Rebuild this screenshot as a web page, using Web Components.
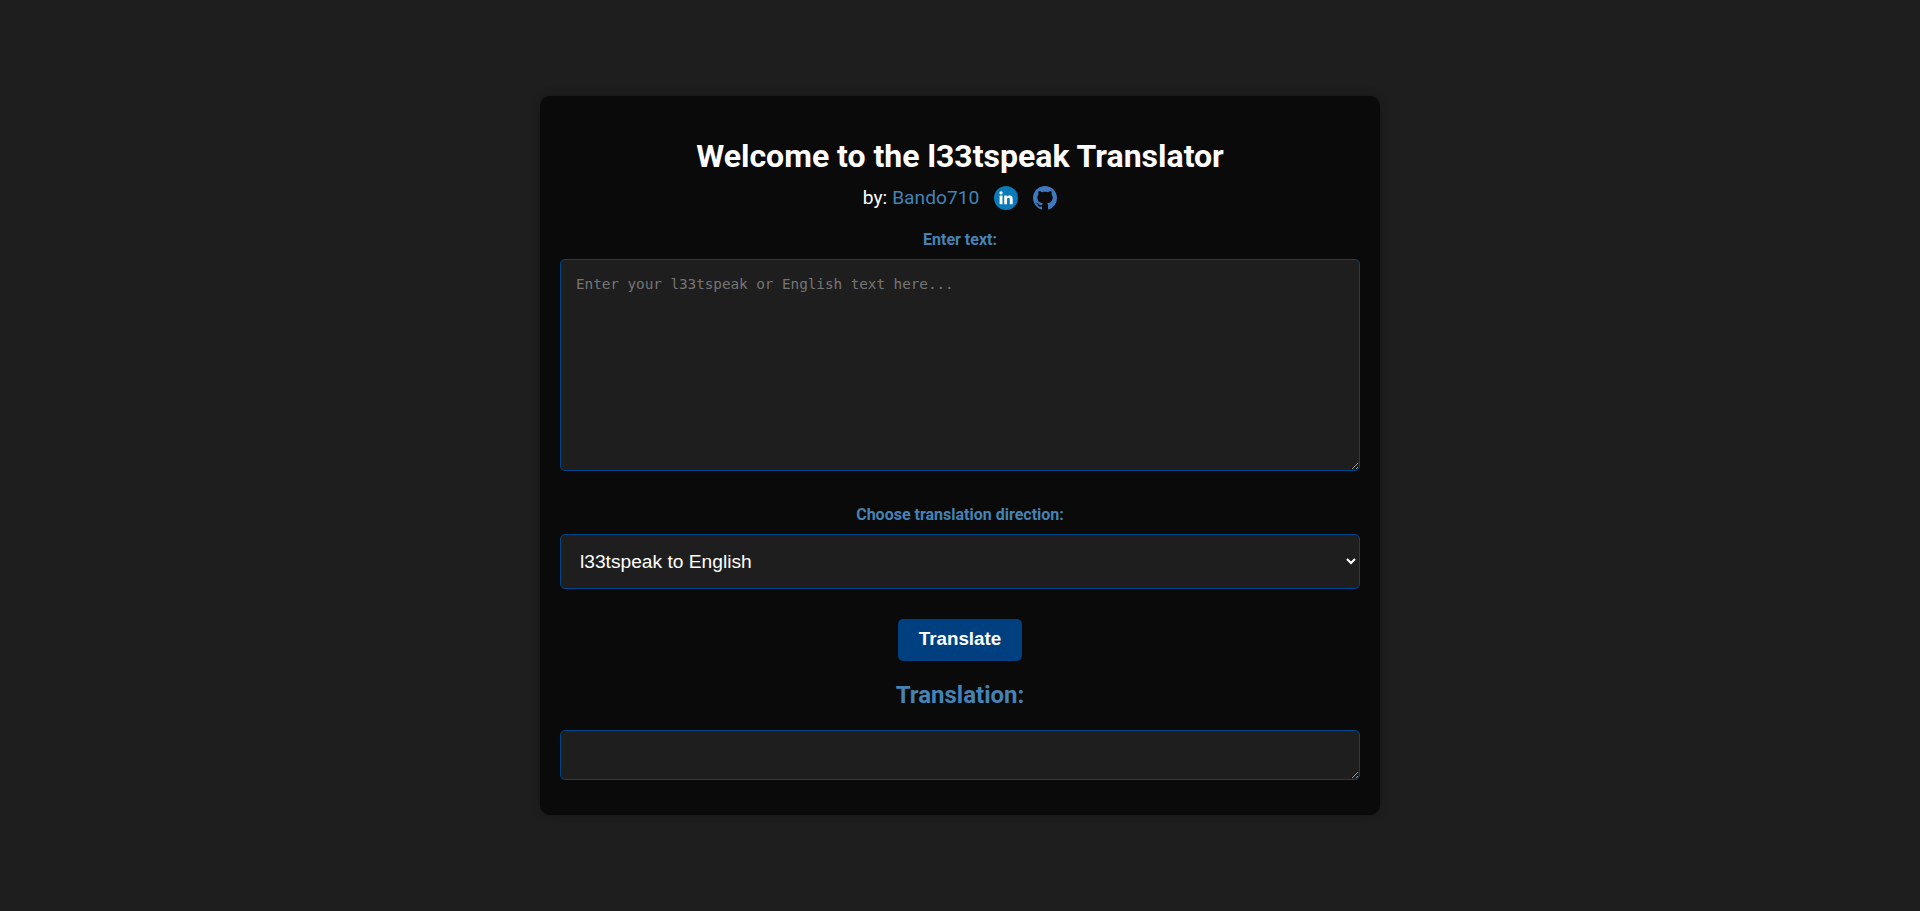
<!DOCTYPE html>
<html lang="en">
<head>
<meta charset="utf-8">
<title>l33tspeak Translator</title>
<style>
  html, body { margin: 0; height: 100%; }
  body {
    background: #1e1e1e;
    color: #fff;
    font-family: Roboto, sans-serif;
  }
</style>
</head>
<body>
<translator-page>
  <translator-card>
    <card-header slot="header" name="Bando710"></card-header>
    <text-field label="Enter text:" placeholder="Enter your l33tspeak or English text here..."></text-field>
    <direction-field label="Choose translation direction:"></direction-field>
    <translate-button>Translate</translate-button>
    <translation-output></translation-output>
  </translator-card>
</translator-page>

<script>
class TranslatorPage extends HTMLElement {
  constructor() {
    super();
    this.attachShadow({ mode: "open" });
    this.shadowRoot.innerHTML = `
<style>
  :host { display: flex; justify-content: center; align-items: center; height: 911px; }
</style>
<slot></slot>`;
  }
}

class TranslatorCard extends HTMLElement {
  constructor() {
    super();
    this.attachShadow({ mode: "open" });
    this.shadowRoot.innerHTML = `
<style>
  :host {
    display: flex;
    flex-direction: column;
    box-sizing: border-box;
    width: 840px;
    height: 719px;
    padding: 42px 20px 0;
    background: #0a0a0a;
    border-radius: 10px;
    box-shadow: 0 0 10px rgba(0,0,0,0.3);
  }
</style>
<slot name="header"></slot>
<slot></slot>`;
  }
}

class CardHeader extends HTMLElement {
  connectedCallback() {
    this.attachShadow({ mode: "open" });
    this.shadowRoot.innerHTML = `
<style>
  :host { display: block; text-align: center; }
  h1 { margin: 0; font-size: 32px; line-height: 37px; font-weight: 700; color: #fff; }
  .by {
    display: flex; justify-content: center; align-items: center;
    height: 24px; margin-top: 11px;
    font-size: 19.2px; line-height: 24px; color: #fff;
  }
  a { color: #4682b4; text-decoration: none; margin-left: 5px; }
  svg { display: block; width: 24px; height: 24px; }
  .li { margin-left: 15px; }
  .gh { margin-left: 15px; }
</style>
<h1>Welcome to the l33tspeak Translator</h1>
<div class="by">by:<a href="#">${this.getAttribute("name")}</a>
  <svg class="li" viewBox="0 0 24 24">
    <circle cx="12" cy="12" r="12" fill="#0a7ab8"/>
    <rect x="5.6" y="9.6" width="2.9" height="8.6" fill="#fff"/>
    <circle cx="7.05" cy="6.9" r="1.65" fill="#fff"/>
    <path fill="#fff" d="M10.2 9.6h2.75v1.2c.45-.8 1.4-1.4 2.65-1.4 2.4 0 3.1 1.55 3.1 3.9v4.9h-2.9v-4.35c0-1.15-.25-2.05-1.35-2.05-1.2 0-1.4.95-1.4 2.05v4.35h-2.85z"/>
  </svg>
  <svg class="gh" viewBox="0 0 16 16">
    <path fill="#4078c0" d="M8 0C3.58 0 0 3.58 0 8c0 3.54 2.29 6.53 5.47 7.59.4.07.55-.17.55-.38 0-.19-.01-.82-.01-1.49-2.01.37-2.53-.49-2.69-.94-.09-.23-.48-.94-.82-1.13-.28-.15-.68-.52-.01-.53.63-.01 1.08.58 1.23.82.72 1.21 1.87.87 2.33.66.07-.52.28-.87.51-1.07-1.78-.2-3.64-.89-3.64-3.95 0-.87.31-1.59.82-2.15-.08-.2-.36-1.02.08-2.12 0 0 .67-.21 2.2.82.64-.18 1.32-.27 2-.27s1.36.09 2 .27c1.53-1.04 2.2-.82 2.2-.82.44 1.1.16 1.92.08 2.12.51.56.82 1.27.82 2.15 0 3.07-1.87 3.75-3.65 3.95.29.25.54.73.54 1.48 0 1.07-.01 1.93-.01 2.2 0 .21.15.46.55.38A8.01 8.01 0 0 0 16 8c0-4.42-3.58-8-8-8z"/>
  </svg>
</div>`;
  }
}

const FIELD_STYLE = `
  :host { display: block; }
  label {
    display: block; text-align: center;
    font-size: 16px; line-height: 19px; font-weight: 700; color: #4682b4;
  }
`;

class TextField extends HTMLElement {
  connectedCallback() {
    this.attachShadow({ mode: "open" });
    this.shadowRoot.innerHTML = `
<style>
  ${FIELD_STYLE}
  :host { margin-top: 20px; }
  label { margin-bottom: 10px; }
  textarea {
    display: block; box-sizing: border-box;
    width: 800px; height: 212px; margin: 0; padding: 16px 15px 15px;
    background: #1e1e1e; color: #fff;
    border: 1px solid #00458c; border-radius: 5px; outline: none;
    font-family: Consolas, "DejaVu Sans Mono", monospace; font-size: 14.4px;
    letter-spacing: -0.08px;
  }
  textarea::placeholder { color: #757575; }
</style>
<label>${this.getAttribute("label")}</label>
<textarea placeholder="${this.getAttribute("placeholder")}"></textarea>`;
  }
}

class DirectionField extends HTMLElement {
  connectedCallback() {
    this.attachShadow({ mode: "open" });
    this.shadowRoot.innerHTML = `
<style>
  ${FIELD_STYLE}
  :host { margin-top: 34px; }
  label { margin-bottom: 10px; }
  select {
    display: block; box-sizing: border-box;
    width: 800px; height: 55px; margin: 0; padding: 0 15px;
    background: #1e1e1e; color: #fff;
    border: 1px solid #00458c; border-radius: 5px; outline: none;
    font-family: "Liberation Sans", Arial, sans-serif; font-size: 19.2px;
  }
</style>
<label>${this.getAttribute("label")}</label>
<select>
  <option>l33tspeak to English</option>
  <option>English to l33tspeak</option>
</select>`;
  }
}

class TranslateButton extends HTMLElement {
  constructor() {
    super();
    this.attachShadow({ mode: "open" });
    this.shadowRoot.innerHTML = `
<style>
  :host { display: flex; justify-content: center; margin-top: 30px; }
  button {
    box-sizing: border-box; width: 124px; height: 42px; padding: 0 0 2px;
    background: #004080; color: #fff;
    border: 0; border-radius: 5px;
    font-family: "Liberation Sans", Arial, sans-serif; font-size: 18.8px; font-weight: 700;
  }
</style>
<button><slot></slot></button>`;
  }
}

class TranslationOutput extends HTMLElement {
  constructor() {
    super();
    this.attachShadow({ mode: "open" });
    this.shadowRoot.innerHTML = `
<style>
  :host { display: block; margin-top: 20px; }
  h2 {
    margin: 0 0 21px; text-align: center;
    font-size: 24px; line-height: 28px; font-weight: 700; color: #4682b4;
  }
  textarea {
    display: block; box-sizing: border-box;
    width: 800px; height: 50px; margin: 0; padding: 15px;
    background: #1e1e1e; color: #fff;
    border: 1px solid #00458c; border-radius: 5px; outline: none;
  }
</style>
<h2>Translation:</h2>
<textarea readonly></textarea>`;
  }
}

customElements.define("translator-page", TranslatorPage);
customElements.define("translator-card", TranslatorCard);
customElements.define("card-header", CardHeader);
customElements.define("text-field", TextField);
customElements.define("direction-field", DirectionField);
customElements.define("translate-button", TranslateButton);
customElements.define("translation-output", TranslationOutput);
</script>
</body>
</html>
